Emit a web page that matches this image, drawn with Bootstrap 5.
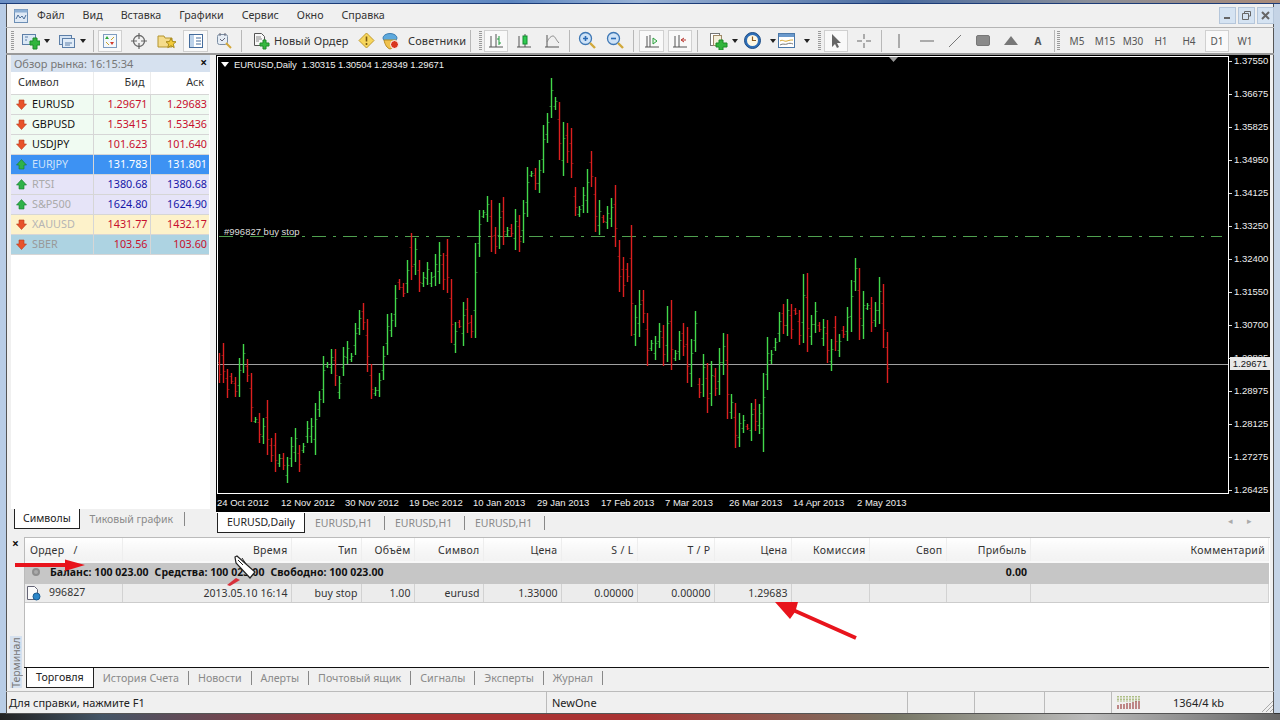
<!DOCTYPE html>
<html lang="ru"><head><meta charset="utf-8"><title>MetaTrader</title>
<link rel="stylesheet" href="https://cdn.jsdelivr.net/npm/bootstrap@5.3.0/dist/css/bootstrap.min.css">
<style>
html,body{height:720px;overflow:hidden}
body{background:#f0f0f0;font-family:"Noto Sans","Liberation Sans",sans-serif;font-size:11px;color:#222;line-height:1.2}
.desk{height:4px;background:linear-gradient(90deg,#6b8fc4 0,#8fb0da 20%,#5d86c0 40%,#9ab3d6 50%,#4a6b9f 70%,#8a8f9a 85%,#a98a78 100%);border-bottom:1px solid #1c3c78}
.framewrap{height:709px;border-left:6px solid #b9cde6;border-right:6px solid #c5d4e6;padding-left:5px;padding-right:4px;box-shadow:inset 1px 0 0 #555,inset -1px 0 0 #555}
.framewrap>*{flex:none}
.menubar{height:23px;margin-left:-5px;margin-right:-4px;padding-left:7px}
.menubar .mi{font-size:10.7px;color:#333}
.mlist{gap:0 18px;margin-left:8px}
.winbtn{width:17px;height:17px;background:#d5e3f2;border:1px solid #b5c6da;margin-left:2px}
.winbtns{margin-right:0}
.toolbar{height:28px;border-top:1px solid #b4b4b4;border-bottom:2px solid #9a9a9a;margin-left:-5px;margin-right:-4px;padding-left:5px}
.ti{height:24px;flex:none}
.ti.on{background:#f9f9f9;box-shadow:inset 0 0 0 1px #d0d0d0;height:22px}
.ti svg{flex:none}
.w6{width:6px}.w7{width:7px}.w8{width:8px}.w12{width:12px}.w26{width:26px}.w28{width:28px}.w29{width:29px}.w33{width:33px}.w35{width:35px}.w36{width:36px}.w40{width:40px}.w42{width:42px}.w24{width:24px}.w110{width:110px}.w92{width:92px}
.on.w28{width:24px;margin:0 2px}.on.w29{width:25px;margin:0 2px}
.sepv{width:1px;height:22px;background:#b8b8b8}
.grip{width:3px;height:20px;background:repeating-linear-gradient(180deg,#9a9a9a 0 1px,#f0f0f0 1px 2px)}
.ttxt{color:#333;font-size:11px;letter-spacing:.12px}
.tf{color:#555;font-size:10px}
.caret-d{width:0;height:0;border:3px solid transparent;border-top:4px solid #222;border-bottom:0}
.mainrow{height:480px}
.leftp{width:199px;margin-right:6px;flex:none}
.lt{height:17px;background:#d6e1ef;color:#777;font-size:11px;padding:0 3px;flex:none}
.lt b{color:#111;font-size:12px}
.lw{background:#fff;height:437px;flex:none}
.mw{width:198px;table-layout:fixed;border-collapse:collapse;margin:0}
.mc1{width:82px}.mc2{width:57px}
.mw th,.mw td{height:20px;padding:0 2px 0 0;text-align:right;border-bottom:1px solid #d6d6d6;font-size:10.8px;font-weight:400;border-left:1px solid #d6d6d6}
.mw th{height:22px;color:#333;border-left:1px solid #ececec;padding-right:5px}
.mw th:first-child,.mw td:first-child{text-align:left;border-left:0;padding-left:5px}
.mw th:first-child{padding-left:7px}
.mw td span.sy{margin-left:5px}
.ca{background:#f0fbf2}.ca td{color:#c8102e}.ca td:first-child{color:#111}
.cb{background:#3d92f3}.cb td{color:#fff}.cb td:first-child{color:#cfe3fa}
.cc{background:#e6e4f8}.cc td{color:#1717a8}.cc td:first-child{color:#aaa}
.cd{background:#fdf2ca}.cd td{color:#c8102e}.cd td:first-child{color:#b5b5b5}
.ce{background:#add3e2}.ce td{color:#c8102e}.ce td:first-child{color:#999}
.tabs-b{height:26px;padding-left:3px;align-items:flex-start}
.tabx{height:14px;padding:0 11px 0 10px;color:#8a8a8a;font-size:10.5px;flex:none;white-space:nowrap;border-right:1px solid #888}
.tabx.act{color:#222;background:#fff;border:1px solid #222;border-top:0;height:20px;padding:0 9px}
.tabs-b .tabx{margin-top:3px}.tabs-b .tabx.act{margin-top:0;padding:0 8px}
.chartc{width:1054px;flex:none}
.chart{height:457px;background:#000;position:relative;color:#eee;font-size:9.5px;padding-left:1px;font-family:"Liberation Sans",Arial,sans-serif;flex:none}
.chartrow{height:439px}
.plotw{width:1012px;height:438px;flex:none;border:1px solid #fff;margin-top:1px;position:relative}
.plotw svg{display:block}
.hint{position:absolute;left:3px;top:2px;white-space:pre;color:#eee;font-size:9.5px;letter-spacing:-.1px}
.hint2{position:absolute;left:6px;top:169px;color:#ddd;font-size:9.5px}
.tri-w{display:inline-block;width:0;height:0;border:4px solid transparent;border-top:5px solid #fff;border-bottom:0;margin-right:5px;vertical-align:1px}
.axis{padding:0 0 0 3px}
.axis div{height:33px;line-height:12px;padding-left:2px;position:relative}
.axis div::before{content:"";position:absolute;left:-3px;top:6px;width:3px;height:1px;background:#ddd}
.lastp{position:absolute;right:0;top:302px;width:40px;height:13px;background:#e8e8e8;color:#111;text-align:center;line-height:13px}
.dates{height:18px}
.dates span{width:64px;flex:none;white-space:nowrap;line-height:18px;color:#eee}
.ctabs{height:23px;padding-right:18px;padding-left:1px;border-top:1px solid #fff;align-items:flex-start}
.ctabs .tabx{margin-top:3px;width:80px}.ctabs .tabx.act{margin-top:0;width:auto}
.nav-arrows{color:#aaa;font-size:9px;gap:14px;margin-top:3px}
.term{height:130px;margin-top:2px;position:relative}
.termside{width:13px;flex:none;position:relative}
.tx{font-size:12px;font-weight:700;color:#111;line-height:10px;margin-top:2px;padding-left:1px}
.vtxt{position:absolute;left:-1px;bottom:-21px;writing-mode:vertical-rl;transform:rotate(180deg);background:#d6e1ef;color:#777;font-size:10.5px;width:12px;height:52px;line-height:12px;z-index:2;text-align:left}
.tbody-w{flex:1;background:#fff;border-top:1px solid #bbb;border-left:1px solid #bbb;height:130px}
.ot{width:1244px;table-layout:fixed;border-collapse:collapse;margin:0}
.k1{width:97px}.k2{width:169px}.k3{width:70px}.k4{width:53px}.k5{width:69px}.k6{width:78px}.k7{width:76px}.k8{width:77px}.k9{width:77px}.k10{width:78px}.k11{width:77px}.k12{width:84px}
.ot th{height:24px;font-weight:400;text-align:right;padding:1px 3px 0 5px;color:#333;border-right:1px solid #eee;background:linear-gradient(#fff,#f6f6f6 60%,#f2f2f2);font-size:10.5px;letter-spacing:.3px;border-bottom:1px solid #ddd;white-space:nowrap}
.ot td{height:18px;text-align:right;padding:0 3px;font-size:10.5px;letter-spacing:.05px;line-height:1;color:#333;background:#ececec;border-right:1px solid #d2d2d2;border-bottom:1px solid #ccc}
.ot tr.bal td{background:#c6c6c6;border-right:0;font-weight:700;color:#111;height:22px;border-top:2px solid #f8f8f8;border-bottom:0;padding-bottom:3px}
.bal td:first-child{text-align:left;padding-left:25px;overflow:visible;white-space:nowrap;position:relative}
.dotg{position:absolute;left:7px;top:5px;width:8px;height:8px;border-radius:50%;background:#aaa;border:2px solid #8e8e8e}
.spc{margin-right:6px}
.orow td:first-child{padding-left:1px}
.orow svg{vertical-align:middle}
.ttabs{height:22px;border-top:1px solid #111;margin-left:13px;margin-right:1px;padding-left:2px;align-items:flex-start}
.ttabs .tabx{font-size:10.7px;margin-top:3px;padding:0 9px 0 9px}
.ttabs .tabx.act{margin-top:0;padding:0 9px 0 9px;height:20px}
.status{height:22px;margin-top:2px;border-top:1px solid #bbb;margin-left:-5px;margin-right:-4px;font-size:11px;box-shadow:0 1px 0 #555}
.sc{height:21px;border-left:1px solid #bbb;flex:none;padding-left:5px}
.s1{width:540px;border-left:0;padding-left:3px}
.s2{width:361px}.s3{width:67px}.s4{width:70px}.s5{width:67px}.s6{flex:1}
.overlay{position:absolute;left:0;top:0;pointer-events:none}
.deskb{height:7px;background:linear-gradient(90deg,#222 0,#456 8%,#a33 30%,#a33 50%,#776 70%,#bbb 85%,#666 100%);border-top:1px solid #333}
</style></head><body>
<div class="desk"></div>
<div class="framewrap d-flex flex-column">
 <div class="menubar d-flex align-items-center">
  <svg width="16" height="16" viewBox="0 0 16 16"><rect x="1.500" y="1.500" width="13" height="13" fill="#dfe9f5" stroke="#6d8fb5"/><rect x="1.500" y="1.500" width="13" height="3" fill="#8fb0d4"/><path d="M3 11l2-4 2 3 2-2 2 3 2-4" fill="none" stroke="#4c6f99"/></svg>
  <div class="d-flex mlist">
   <span class="mi">Файл</span><span class="mi">Вид</span><span class="mi">Вставка</span><span class="mi">Графики</span><span class="mi">Сервис</span><span class="mi">Окно</span><span class="mi">Справка</span>
  </div>
  <div class="ms-auto d-flex winbtns">
   <div class="winbtn d-flex align-items-center justify-content-center"><svg width="9" height="9"><path d="M1 7h6" stroke="#666" stroke-width="2"/></svg></div>
   <div class="winbtn d-flex align-items-center justify-content-center"><svg width="11" height="11"><path d="M3.500 3V1.500h6V6H8M1.500 3.500h6v6h-6z" fill="none" stroke="#666"/></svg></div>
   <div class="winbtn d-flex align-items-center justify-content-center"><svg width="9" height="9"><path d="M1 1l7 7M8 1l-7 7" stroke="#666" stroke-width="2"/></svg></div>
  </div>
 </div>
 <div class="toolbar d-flex align-items-center">
  <div class="ti w6 d-flex align-items-center"><div class="grip"></div></div>
  <div class="ti w33 d-flex align-items-center ps-1 gap-1"><svg width="19" height="18" viewBox="0 0 19 18"><rect x="1.500" y="2.500" width="13" height="10" fill="#dbe8f5" stroke="#5d7fa8"/><path d="M4 5h3M4 8h2" stroke="#5d7fa8"/><path d="M9 9h3V6h4v3h3v4h-3v4h-4v-4H9z" fill="#31b53c" stroke="#1d8a28"/></svg><div class="caret-d"></div></div>
  <div class="ti w40 d-flex align-items-center ps-2 gap-1"><svg width="18" height="16" viewBox="0 0 18 16"><rect x="1.500" y="2.500" width="12" height="9" fill="#d5e4f4" stroke="#5d7fa8"/><rect x="4.500" y="5.500" width="12" height="9" fill="#e2edf8" stroke="#5d7fa8"/><path d="M7 10h7M7 12h5" stroke="#5d7fa8"/></svg><div class="caret-d"></div></div>
  <div class="ti w6 d-flex align-items-center justify-content-center"><div class="sepv"></div></div>
  <div class="ti w28 on d-flex align-items-center justify-content-center"><svg width="16" height="16" viewBox="0 0 16 16"><rect x="1.500" y="1.500" width="13" height="13" fill="#f4f8fc" stroke="#7e9cc0"/><path d="M5 3l2 3H3z" fill="#2fa83a"/><path d="M10 12l2-3H8z" fill="#d23c2c"/><path d="M4 9l3 3M12 4L9 7" stroke="#c9a227"/></svg></div>
  <div class="ti w29 d-flex align-items-center justify-content-center"><svg width="18" height="18" viewBox="0 0 18 18"><circle cx="9" cy="9" r="5.500" fill="none" stroke="#666" stroke-width="1.300"/><path d="M9 1v6M9 11v6M1 9h6M11 9h6" stroke="#666" stroke-width="1.200"/></svg></div>
  <div class="ti w28 d-flex align-items-center justify-content-center"><svg width="20" height="18" viewBox="0 0 20 18"><path d="M1 4h6l1 2h7v9H1z" fill="#f5dc8c" stroke="#b3942f"/><path d="M14 6l1.500 3.500 3.500.3-2.700 2.300.9 3.500-3.200-1.900-3.200 1.900.9-3.500L9 9.800l3.500-.3z" fill="#f2cb3a" stroke="#a98a1c"/></svg></div>
  <div class="ti w29 on d-flex align-items-center justify-content-center"><svg width="16" height="16" viewBox="0 0 16 16"><rect x="1.500" y="1.500" width="13" height="13" fill="#fff" stroke="#456c9c"/><rect x="2" y="2" width="4" height="12" fill="#bcd2ea"/><path d="M8 5h5M8 8h5M8 11h5" stroke="#456c9c"/></svg></div>
  <div class="ti w28 d-flex align-items-center justify-content-center"><svg width="19" height="19" viewBox="0 0 19 19"><rect x="2.500" y="3.500" width="10" height="10" rx="2" fill="#e6edf5" stroke="#7c8ea3"/><path d="M5 2v3M10 2v3M5 8l2 2 3-3" stroke="#667" fill="none"/><path d="M11 12l5 5" stroke="#d4a83a" stroke-width="2"/></svg></div>
  <div class="ti w6 d-flex align-items-center justify-content-center"><div class="sepv"></div></div>
  <div class="ti w110 d-flex align-items-center ps-2"><svg width="18" height="18" viewBox="0 0 18 18"><path d="M2.500 1.500h7l3 3v9h-10z" fill="#f8f8f8" stroke="#555"/><path d="M4 5h5M4 7h6M4 9h3" stroke="#888"/><path d="M8 11h3V8h3v3h3v3h-3v3h-3v-3H8z" fill="#35b83f" stroke="#1e8a29"/></svg><span class="ttxt ms-1">Новый Ордер</span></div>
  <div class="ti w24 d-flex align-items-center justify-content-center"><svg width="17" height="17" viewBox="0 0 17 17"><path d="M8.500 1L16 8.500 8.500 16 1 8.500z" fill="#f7d65c" stroke="#c19a2c"/><path d="M8.500 4.500v5M8.500 11v2" stroke="#7a5a10" stroke-width="1.600"/></svg></div>
  <div class="ti w92 d-flex align-items-center ps-1"><svg width="18" height="18" viewBox="0 0 18 18"><ellipse cx="8" cy="6" rx="7" ry="4.500" fill="#5da9dd" stroke="#3f7eb0"/><path d="M2 8c1 5 3 8 6 9 3-1 5-4 6-9z" fill="#f0c24e" stroke="#b98c22"/><circle cx="12.500" cy="12.500" r="4" fill="#d9361f" stroke="#fff"/></svg><span class="ttxt ms-2">Советники</span></div>
  <div class="ti w12 d-flex align-items-center gap-1"><div class="sepv"></div><div class="grip ms-1"></div></div>
  <div class="ti w28 on d-flex align-items-center justify-content-center"><svg width="16" height="16" viewBox="0 0 16 16"><path d="M1 14h14M3 3v11M8 1v13" stroke="#555" fill="none"/><path d="M11 3v9M9 6h2M11 10h2" stroke="#1f9a3a" fill="none"/></svg></div>
  <div class="ti w28 d-flex align-items-center justify-content-center"><svg width="16" height="16" viewBox="0 0 16 16"><path d="M1 14h14M3 3v11" stroke="#555"/><path d="M9 1v13" stroke="#555"/><rect x="7" y="3" width="4" height="8" fill="#2ecb50" stroke="#138a2f"/></svg></div>
  <div class="ti w28 d-flex align-items-center justify-content-center"><svg width="16" height="16" viewBox="0 0 16 16"><path d="M1 14h14M3 2v12" stroke="#555"/><path d="M3 9c2-4 4-6 6-6s3 4 6 7" fill="none" stroke="#888"/></svg></div>
  <div class="ti w7 d-flex align-items-center justify-content-center"><div class="sepv"></div></div>
  <div class="ti w28 d-flex align-items-center justify-content-center"><svg width="19" height="19" viewBox="0 0 19 19"><circle cx="7.500" cy="7.500" r="6" fill="#cfe3f7" stroke="#3f78b5" stroke-width="1.300"/><path d="M5 7.500h5M7.500 5v5" stroke="#2b6bb5" stroke-width="1.600"/><path d="M12 12l5 5" stroke="#d1a93c" stroke-width="2.400"/></svg></div>
  <div class="ti w28 d-flex align-items-center justify-content-center"><svg width="19" height="19" viewBox="0 0 19 19"><circle cx="7.500" cy="7.500" r="6" fill="#cfe3f7" stroke="#3f78b5" stroke-width="1.300"/><path d="M5 7.500h5" stroke="#2b6bb5" stroke-width="1.600"/><path d="M12 12l5 5" stroke="#d1a93c" stroke-width="2.400"/></svg></div>
  <div class="ti w8 d-flex align-items-center justify-content-center"><div class="sepv"></div></div>
  <div class="ti w29 on d-flex align-items-center justify-content-center"><svg width="16" height="16" viewBox="0 0 16 16"><path d="M1 14h14M3 3v11M6 2v12" stroke="#555"/><path d="M9 5l4 3-4 3z" fill="#e8f7e8" stroke="#2aa03c"/></svg></div>
  <div class="ti w28 on d-flex align-items-center justify-content-center"><svg width="16" height="16" viewBox="0 0 16 16"><path d="M1 14h14M3 3v11M7 2v12" stroke="#555"/><path d="M14 7H10M12 5l-3 2 3 2" fill="none" stroke="#b8322a"/></svg></div>
  <div class="ti w7 d-flex align-items-center justify-content-center"><div class="sepv"></div></div>
  <div class="ti w42 d-flex align-items-center ps-2 gap-1"><svg width="19" height="18" viewBox="0 0 19 18"><rect x="1.500" y="1.500" width="9" height="12" fill="#fff" stroke="#777"/><rect x="4.500" y="3.500" width="8" height="10" fill="#f4efdb" stroke="#a08a68"/><path d="M7 11h3V8h4v3h4v4h-4v3h-4v-3H7z" fill="#31b53c" stroke="#1d8a28"/></svg><div class="caret-d"></div></div>
  <div class="ti w35 d-flex align-items-center gap-1"><svg width="19" height="19" viewBox="0 0 19 19"><circle cx="9.500" cy="9.500" r="8" fill="#2f6fb8" stroke="#1e4d85"/><circle cx="9.500" cy="9.500" r="5.500" fill="#fff8e4"/><path d="M9.500 5.500v4h3.500" stroke="#8a5a20" fill="none" stroke-width="1.200"/></svg><div class="caret-d ms-1"></div></div>
  <div class="ti w36 d-flex align-items-center gap-1"><svg width="18" height="16" viewBox="0 0 18 16"><rect x=".5" y=".5" width="16" height="14" fill="#fff" stroke="#4c78a8"/><rect x="1" y="1" width="15" height="3" fill="#6a99cc"/><path d="M2 8c3-2 4 1 7 0s4-1 6-1" fill="none" stroke="#d8a52a"/><path d="M2 12c3-2 5 0 7-1s4-1 6 0" fill="none" stroke="#777"/></svg><div class="caret-d ms-1"></div></div>
  <div class="ti w8 d-flex align-items-center"><div class="grip ms-1"></div></div>
  <div class="ti w28 on d-flex align-items-center justify-content-center"><svg width="14" height="16" viewBox="0 0 14 16"><path d="M3 1v13l3-3 2 4 2-1-2-4h4z" fill="#666"/></svg></div>
  <div class="ti w28 d-flex align-items-center justify-content-center"><svg width="16" height="16" viewBox="0 0 16 16"><path d="M8 1v5M8 10v5M1 8h5M10 8h5" stroke="#666"/></svg></div>
  <div class="ti w7 d-flex align-items-center justify-content-center"><div class="sepv"></div></div>
  <div class="ti w28 d-flex align-items-center justify-content-center"><svg width="4" height="14"><path d="M2 0v14" stroke="#666"/></svg></div>
  <div class="ti w28 d-flex align-items-center justify-content-center"><svg width="14" height="4"><path d="M0 2h14" stroke="#666"/></svg></div>
  <div class="ti w28 d-flex align-items-center justify-content-center"><svg width="14" height="14"><path d="M1 13L13 1" stroke="#777"/></svg></div>
  <div class="ti w28 d-flex align-items-center justify-content-center"><svg width="14" height="11"><rect x=".5" y=".5" width="13" height="10" rx="1.500" fill="#8a8a8a" stroke="#777"/></svg></div>
  <div class="ti w28 d-flex align-items-center justify-content-center"><svg width="14" height="9"><path d="M7 0l7 9H0z" fill="#777"/></svg></div>
  <div class="ti w26 d-flex align-items-center justify-content-center"><span class="fw-bold tf">A</span></div>
  <div class="ti w6 d-flex align-items-center justify-content-center"><div class="sepv"></div></div>
  <div class="ti w6 d-flex align-items-center"><div class="grip"></div></div>
  <div class="ti w28 d-flex align-items-center justify-content-center tf">M5</div>
  <div class="ti w28 d-flex align-items-center justify-content-center tf">M15</div>
  <div class="ti w28 d-flex align-items-center justify-content-center tf">M30</div>
  <div class="ti w28 d-flex align-items-center justify-content-center tf">H1</div>
  <div class="ti w28 d-flex align-items-center justify-content-center tf">H4</div>
  <div class="ti w28 on d-flex align-items-center justify-content-center tf">D1</div>
  <div class="ti w28 d-flex align-items-center justify-content-center tf">W1</div>
 </div>
 <div class="mainrow d-flex">
  <div class="leftp d-flex flex-column">
   <div class="lt d-flex align-items-center justify-content-between"><span>Обзор рынка: 16:15:34</span><b>×</b></div>
   <div class="lw">
    <table class="mw"><colgroup><col class="mc1"><col class="mc2"><col></colgroup>
     <tr><th>Символ</th><th>Бид</th><th>Аск</th></tr>
     <tr class="ca"><td><svg width="11" height="11" viewBox="0 0 11 11"><path d="M3 1h5v4h2.500L5.500 10.500.5 5H3z" fill="#e8532b" stroke="#b83a1a" stroke-width=".6"/></svg><span class="sy">EURUSD</span></td><td>1.29671</td><td>1.29683</td></tr>
     <tr class="ca"><td><svg width="11" height="11" viewBox="0 0 11 11"><path d="M3 1h5v4h2.500L5.500 10.500.5 5H3z" fill="#e8532b" stroke="#b83a1a" stroke-width=".6"/></svg><span class="sy">GBPUSD</span></td><td>1.53415</td><td>1.53436</td></tr>
     <tr class="ca"><td><svg width="11" height="11" viewBox="0 0 11 11"><path d="M3 1h5v4h2.500L5.500 10.500.5 5H3z" fill="#e8532b" stroke="#b83a1a" stroke-width=".6"/></svg><span class="sy">USDJPY</span></td><td>101.623</td><td>101.640</td></tr>
     <tr class="cb"><td><svg width="11" height="11" viewBox="0 0 11 11"><path d="M3 10h5V6h2.500L5.500.5.5 6H3z" fill="#2fb24a" stroke="#14782c" stroke-width=".6"/></svg><span class="sy">EURJPY</span></td><td>131.783</td><td>131.801</td></tr>
     <tr class="cc"><td><svg width="11" height="11" viewBox="0 0 11 11"><path d="M3 10h5V6h2.500L5.500.5.5 6H3z" fill="#2fb24a" stroke="#14782c" stroke-width=".6"/></svg><span class="sy">RTSI</span></td><td>1380.68</td><td>1380.68</td></tr>
     <tr class="cc"><td><svg width="11" height="11" viewBox="0 0 11 11"><path d="M3 10h5V6h2.500L5.500.5.5 6H3z" fill="#2fb24a" stroke="#14782c" stroke-width=".6"/></svg><span class="sy">S&amp;P500</span></td><td>1624.80</td><td>1624.90</td></tr>
     <tr class="cd"><td><svg width="11" height="11" viewBox="0 0 11 11"><path d="M3 1h5v4h2.500L5.500 10.500.5 5H3z" fill="#e8532b" stroke="#b83a1a" stroke-width=".6"/></svg><span class="sy">XAUUSD</span></td><td>1431.77</td><td>1432.17</td></tr>
     <tr class="ce"><td><svg width="11" height="11" viewBox="0 0 11 11"><path d="M3 1h5v4h2.500L5.500 10.500.5 5H3z" fill="#e8532b" stroke="#b83a1a" stroke-width=".6"/></svg><span class="sy">SBER</span></td><td>103.56</td><td>103.60</td></tr>
    </table>
   </div>
   <div class="tabs-b d-flex">
    <div class="tabx act d-flex align-items-center">Символы</div>
    <div class="tabx d-flex align-items-center">Тиковый график</div>
   </div>
  </div>
  <div class="chartc d-flex flex-column">
   <div class="chart">
    <div class="d-flex chartrow">
     <div class="plotw">
      <svg id="plot" width="1010" height="436" viewBox="218 57 1010 436"></svg>
      <div class="hint"><span class="tri-w"></span>EURUSD,Daily  1.30315 1.30504 1.29349 1.29671</div>
      <div class="hint2">#996827 buy stop</div>
     </div>
     <div class="axis">
      <div>1.37550</div><div>1.36675</div><div>1.35825</div><div>1.34950</div><div>1.34125</div><div>1.33250</div><div>1.32400</div><div>1.31550</div><div>1.30700</div><div>1.29825</div><div>1.28975</div><div>1.28125</div><div>1.27275</div><div>1.26425</div>
     </div>
     <div class="lastp">1.29671</div>
    </div>
    <div class="dates d-flex"><span>24 Oct 2012</span><span>12 Nov 2012</span><span>30 Nov 2012</span><span>19 Dec 2012</span><span>10 Jan 2013</span><span>29 Jan 2013</span><span>17 Feb 2013</span><span>7 Mar 2013</span><span>26 Mar 2013</span><span>14 Apr 2013</span><span>2 May 2013</span></div>
   </div>
   <div class="ctabs d-flex">
    <div class="tabx act d-flex align-items-center">EURUSD,Daily</div>
    <div class="tabx d-flex align-items-center">EURUSD,H1</div>
    <div class="tabx d-flex align-items-center">EURUSD,H1</div>
    <div class="tabx d-flex align-items-center">EURUSD,H1</div>
    <div class="ms-auto d-flex nav-arrows"><span>◂</span><span>▸</span></div>
   </div>
  </div>
 </div>
 <div class="term d-flex">
  <div class="termside"><div class="tx">×</div><div class="vtxt">Терминал</div></div>
  <div class="tbody-w">
   <table class="ot"><colgroup><col class="k1"><col class="k2"><col class="k3"><col class="k4"><col class="k5"><col class="k6"><col class="k7"><col class="k8"><col class="k9"><col class="k10"><col class="k11"><col class="k12"><col></colgroup>
    <tr><th class="text-start">Ордер &nbsp;&nbsp;/</th><th>Время</th><th>Тип</th><th>Объём</th><th>Символ</th><th>Цена</th><th>S / L</th><th>T / P</th><th>Цена</th><th>Комиссия</th><th>Своп</th><th>Прибыль</th><th>Комментарий</th></tr>
    <tr class="bal"><td colspan="11"><span class="dotg"></span><span class="spc">Баланс: 100 023.00</span><span class="spc">Средства: 100 023.00</span><span class="spc">Свободно: 100 023.00</span></td><td>0.00</td><td></td></tr>
    <tr class="orow"><td class="text-start"><svg width="15" height="16" viewBox="0 0 15 16" class="me-2"><path d="M1.500 1.500h7l3 3v10h-10z" fill="#fbfbfb" stroke="#667"/><circle cx="10.500" cy="11.500" r="3.500" fill="#2c86c8" stroke="#1a5a90"/></svg>996827</td><td>2013.05.10 16:14</td><td>buy stop</td><td>1.00</td><td>eurusd</td><td>1.33000</td><td>0.00000</td><td>0.00000</td><td>1.29683</td><td></td><td></td><td></td><td></td></tr>
   </table>
  </div>
 </div>
 <div class="ttabs d-flex">
  <div class="tabx act d-flex align-items-center">Торговля</div>
  <div class="tabx d-flex align-items-center">История Счета</div>
  <div class="tabx d-flex align-items-center">Новости</div>
  <div class="tabx d-flex align-items-center">Алерты</div>
  <div class="tabx d-flex align-items-center">Почтовый ящик</div>
  <div class="tabx d-flex align-items-center">Сигналы</div>
  <div class="tabx d-flex align-items-center">Эксперты</div>
  <div class="tabx d-flex align-items-center">Журнал</div>
 </div>
 <div class="status d-flex align-items-center">
  <div class="sc s1 d-flex align-items-center">Для справки, нажмите F1</div>
  <div class="sc s2 d-flex align-items-center">NewOne</div>
  <div class="sc s3"></div><div class="sc s4"></div><div class="sc s5"></div>
  <div class="sc s6 d-flex align-items-center gap-4"><svg width="24" height="13" viewBox="0 0 24 13"><g stroke-width="1"><path d="M1 0v6M4 0v6M7 0v6M10 0v6M13 0v6M16 0v6M19 0v6M22 0v5" stroke="#6f8f1e" stroke-dasharray="1 .5"/><path d="M1 9v4M4 8v5M7 8v5M10 7v6M13 7v6M16 6v7M19 5v8M22 5v8" stroke="#8c1c1c"/></g></svg><span class="ms-2">1364/4 kb</span><svg class="ms-auto align-self-end" width="14" height="14" viewBox="0 0 14 14"><path d="M13 2L2 13M13 6l-7 7M13 10l-3 3" stroke="#aaa" fill="none"/></svg></div>
 </div>
</div>
<div class="deskb"></div>
<svg class="overlay" width="1280" height="720" viewBox="0 0 1280 720">
 <path d="M15 563h50v-3.500l20 5.500-20 6V567H15z" fill="#e8141c"/>
 <path d="M856.800 636.200L796 609.200 798 602 775 602 790 619 794.500 612.800 855.200 639.800z" fill="#e8141c"/>
 <path d="M227 585l9-7 4 2-10 6z" fill="#d8303a"/>
 <path d="M235 557l2-1 18 16-5 6-14-15z" fill="#fff" stroke="#222" stroke-width="1.200"/>
 <path d="M238 560l5 5 M242 558l4 6" stroke="#222"/>
</svg>
<script>
var G=[[239,358,397],[243,344,373],[255,417,423],[263,418,444],[279,454,467],[287,457,483],[291,437,467],[295,428,462],[303,443,453],[307,421,443],[311,418,443],[315,403,455],[319,391,417],[323,356,403],[327,362,368],[331,349,374],[339,376,399],[343,347,376],[347,341,364],[351,353,362],[355,323,355],[359,310,335],[375,387,396],[379,373,397],[383,346,380],[387,314,355],[391,313,337],[395,285,327],[407,260,293],[415,238,275],[423,272,287],[427,262,285],[431,272,287],[435,254,286],[439,242,284],[455,322,353],[463,302,346],[475,243,338],[479,210,257],[483,210,218],[487,196,222],[499,203,249],[507,227,237],[515,209,250],[523,200,243],[527,167,217],[531,171,177],[539,160,193],[543,125,173],[547,113,143],[551,78,118],[555,97,110],[563,122,176],[579,206,217],[583,187,213],[587,169,213],[599,200,235],[607,206,229],[611,198,227],[635,305,346],[639,290,337],[651,340,351],[655,336,360],[659,323,348],[667,306,362],[675,350,361],[679,331,360],[691,339,387],[695,311,352],[703,354,397],[711,361,406],[719,348,395],[723,333,375],[731,394,419],[739,413,447],[743,415,433],[751,403,441],[759,404,434],[763,373,452],[767,337,390],[771,350,364],[775,338,351],[779,312,342],[787,299,336],[803,274,343],[811,315,345],[815,302,333],[823,319,346],[831,339,371],[839,334,357],[847,307,341],[851,280,332],[855,258,291],[863,291,339],[867,303,310],[875,302,327],[879,277,324]];
var R=[[219,353,383],[223,343,383],[227,369,398],[231,373,384],[235,377,397],[247,359,382],[251,373,422],[259,413,443],[267,400,455],[271,438,462],[275,433,472],[283,453,470],[299,445,472],[335,349,386],[363,303,330],[367,319,372],[371,364,399],[399,279,290],[403,283,297],[411,233,280],[419,260,292],[443,253,290],[447,239,293],[451,279,343],[459,320,328],[467,298,333],[471,315,338],[491,200,252],[495,227,254],[503,197,245],[511,224,237],[519,215,252],[535,168,190],[559,102,160],[567,123,163],[571,128,178],[575,187,216],[591,151,187],[595,177,232],[603,215,223],[615,185,247],[619,240,292],[623,257,297],[627,263,282],[631,225,336],[643,290,323],[647,313,366],[663,325,366],[671,300,370],[683,323,356],[687,327,383],[699,378,398],[707,363,413],[715,368,396],[727,334,419],[735,403,448],[747,424,430],[755,399,431],[783,304,334],[791,304,339],[795,308,315],[799,310,345],[807,273,352],[819,322,332],[827,320,363],[835,316,351],[843,326,338],[859,268,340],[871,297,332],[883,284,348],[887,332,383]];
function st(a){return a.map(function(b){return "M"+(b[0]+.5)+" "+b[1]+"V"+b[2]}).join("")}
function tk(a,up){return a.map(function(b){var x=b[0]+.5,s=b[2]-b[1],o=up?Math.round(b[2]-s*.3):Math.round(b[1]+s*.3),c=up?Math.round(b[1]+s*.3):Math.round(b[2]-s*.3);return "M"+(x-2)+" "+(o+.5)+"h2M"+x+" "+(c+.5)+"h2"}).join("")}
document.getElementById("plot").innerHTML='<path d="'+tk(R,false)+'" fill="none" stroke="#d02020" opacity=".55"/><path d="'+tk(G,true)+'" fill="none" stroke="#48d050" opacity=".55"/><path d="M219 236.500H1222" stroke="#4fa04f" stroke-dasharray="14 7 3 7" fill="none"/><path d="M218 364.500H1228" stroke="#a0a0a0" fill="none"/><path d="'+st(R)+'" fill="none" stroke="#dc1f1f" stroke-width="1.400"/><path d="'+st(G)+'" fill="none" stroke="#42d84a" stroke-width="1.400"/><path d="M889 57h9l-4.500 5z" fill="#999"/>';
</script>
</body></html>
